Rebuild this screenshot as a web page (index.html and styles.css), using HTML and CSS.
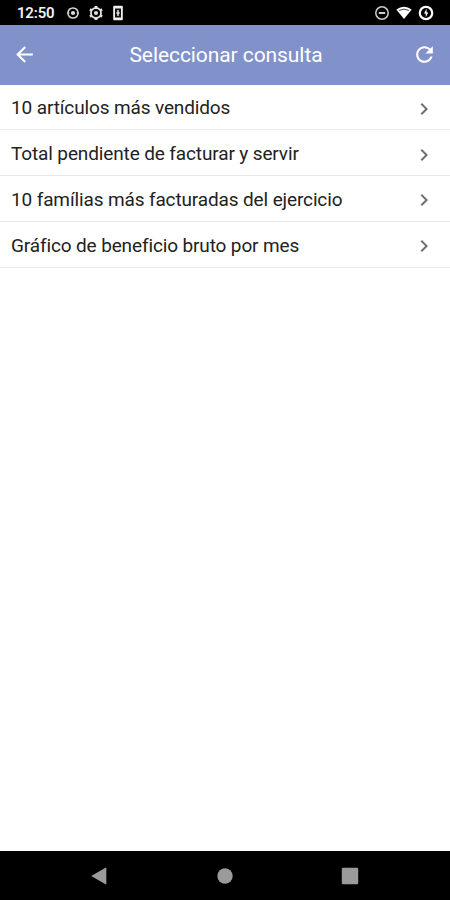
FILE: index.html
```html
<!DOCTYPE html>
<html lang="es">
<head>
    <meta charset="UTF-8">
    <meta name="viewport" content="width=device-width, initial-scale=1.0">
    <title>Seleccionar consulta</title>
    <link rel="stylesheet" href="styles.css">
</head>
<body>

<div class="status-bar">
    <span class="clock">12:50</span>
    <div class="status-icons">
        <svg width="14" height="14" viewBox="0 0 14 14" fill="none" stroke="#d8d8d8">
            <circle cx="7" cy="7" r="5.1" stroke-width="1.5"/>
            <circle cx="7" cy="7" r="2.1" fill="#ddd" stroke="none"/>
            <path d="M1 7h2.5M10.5 7H13"/>
        </svg>
        <svg width="16" height="16" viewBox="0 0 16 16" fill="none" stroke="#e4e4e4">
            <circle cx="8" cy="8" r="5" stroke-width="1.8"/>
            <circle cx="8" cy="8" r="2.1" fill="#ddd" stroke="none"/>
            <path d="M6.6 1.900h2.800M6.600 14.100h2.800M2.100 6l1.300-2.100M12.600 3.900l1.300 2.100M2.100 10l1.300 2.100M12.600 12.100l1.300-2.100" stroke-width="2"/>
        </svg>
        <svg width="12" height="16" viewBox="0 0 12 16">
            <path d="M2.200.7h7.600q1 0 1 1v12.600q0 1-1 1H2.200q-1 0-1-1V1.700q0-1 1-1z" fill="#eee"/>
            <path d="M3 3.500h6v9H3z" fill="#111"/>
            <path d="M6 5v6M4.400 8h3.200" stroke="#eee" stroke-width="1.400"/>
        </svg>
    </div>
    <div class="status-icons right">
        <svg width="16" height="16" viewBox="0 0 16 16" fill="none" stroke="#ccc">
            <circle cx="8" cy="8" r="6.200" stroke-width="1.500"/>
            <path d="M4.800 8h6.400" stroke-width="2"/>
        </svg>
        <svg width="16" height="14" viewBox="0 0 16 14">
            <path d="M.3 3.500Q8-2.200 15.700 3.500L8 13z" fill="#fff"/>
            <path d="M3 4.500q5-2.800 10 0" fill="none" stroke="#444" stroke-width="1"/>
        </svg>
        <svg width="16" height="16" viewBox="0 0 16 16" fill="none">
            <circle cx="8" cy="8" r="6.200" stroke="#fff" stroke-width="2.200"/>
            <path d="M8.600 3.800L6 8.500h1.700v3.800L10.300 7.500H8.600z" fill="#fff"/>
        </svg>
    </div>
</div>

<div class="header">
    <svg class="icon" viewBox="0 0 24 24"><path d="M20 11H7.830l5.590-5.590L12 4l-8 8 8 8 1.410-1.410L7.830 13H20v-2z"/></svg>
    <h1>Seleccionar consulta</h1>
    <svg class="icon" viewBox="0 0 24 24"><path d="M17.650 6.350C16.200 4.900 14.210 4 12 4c-4.420 0-7.990 3.580-7.990 8s3.570 8 7.990 8c3.730 0 6.840-2.550 7.730-6h-2.080c-.82 2.330-3.040 4-5.650 4-3.310 0-6-2.690-6-6s2.690-6 6-6c1.660 0 3.140.69 4.220 1.780L13 11h7V4l-2.350 2.350z"/></svg>
</div>

<ul class="query-list">
    <li>
        <span>10 artículos más vendidos</span>
        <svg class="chevron" viewBox="0 0 24 24"><path d="M10 6L8.590 7.410 13.170 12l-4.580 4.590L10 18l6-6z"/></svg>
    </li>
    <li>
        <span>Total pendiente de facturar y servir</span>
        <svg class="chevron" viewBox="0 0 24 24"><path d="M10 6L8.590 7.410 13.170 12l-4.580 4.590L10 18l6-6z"/></svg>
    </li>
    <li>
        <span>10 famílias más facturadas del ejercicio</span>
        <svg class="chevron" viewBox="0 0 24 24"><path d="M10 6L8.590 7.410 13.170 12l-4.580 4.590L10 18l6-6z"/></svg>
    </li>
    <li>
        <span>Gráfico de beneficio bruto por mes</span>
        <svg class="chevron" viewBox="0 0 24 24"><path d="M10 6L8.590 7.410 13.170 12l-4.580 4.590L10 18l6-6z"/></svg>
    </li>
</ul>

<div class="nav-bar">
    <svg width="18" height="18" viewBox="0 0 18 18"><path d="M1.200 9L15.500.8q.8-.3.800.5v15.400q0 .8-.8.500z"/></svg>
    <svg width="18" height="18" viewBox="0 0 18 18"><circle cx="9" cy="9" r="7.700"/></svg>
    <svg width="18" height="18" viewBox="0 0 18 18"><rect x=".8" y=".8" width="16.400" height="16.400" rx="1.200"/></svg>
</div>

</body>
</html>
```
FILE: styles.css
```css
* {
    box-sizing: border-box;
}
body {
    font-family: Roboto, "Liberation Sans", sans-serif;
    display: flex;
    flex-direction: column;
    height: 100vh;
    margin: 0;
    background: #fff;
}
svg {
    display: block;
    flex: none;
}
.status-bar {
    display: flex;
    align-items: center;
    height: 25px;
    padding: 1px 16px 0 17px;
    background: #000;
    color: #f2f2f2;
}
.clock {
    width: 49px;
    font-size: 15px;
    font-weight: 600;
    letter-spacing: -0.2px;
}
.status-icons {
    display: flex;
    align-items: center;
    gap: 8px;
}
.status-icons.right {
    margin-left: auto;
    gap: 6px;
}
.header {
    display: flex;
    align-items: center;
    justify-content: space-between;
    height: 59.5px;
    padding: 0 13px 0 12px;
    background: #8092c9;
    color: #fff;
}
.header h1 {
    margin: 0;
    padding-left: 3px;
    font-size: 21px;
    font-weight: 400;
    letter-spacing: -0.08px;
}
.icon {
    width: 25px;
    height: 25px;
    fill: #fff;
}
.query-list {
    flex: 1;
    margin: 0;
    padding: 0;
    list-style: none;
}
.query-list li {
    display: flex;
    align-items: center;
    justify-content: space-between;
    height: 45.75px;
    padding: 2px 14px 0 11px;
    border-bottom: 1px solid #e9e9e9;
    font-size: 19px;
    letter-spacing: -0.13px;
    color: #222;
}
.chevron {
    width: 24px;
    height: 24px;
    margin-top: 2px;
    fill: #707070;
}
.nav-bar {
    display: flex;
    align-items: center;
    justify-content: space-between;
    height: 49px;
    padding: 0 91px 0 90px;
    background: #000;
    fill: #9b9b9b;
}
```
